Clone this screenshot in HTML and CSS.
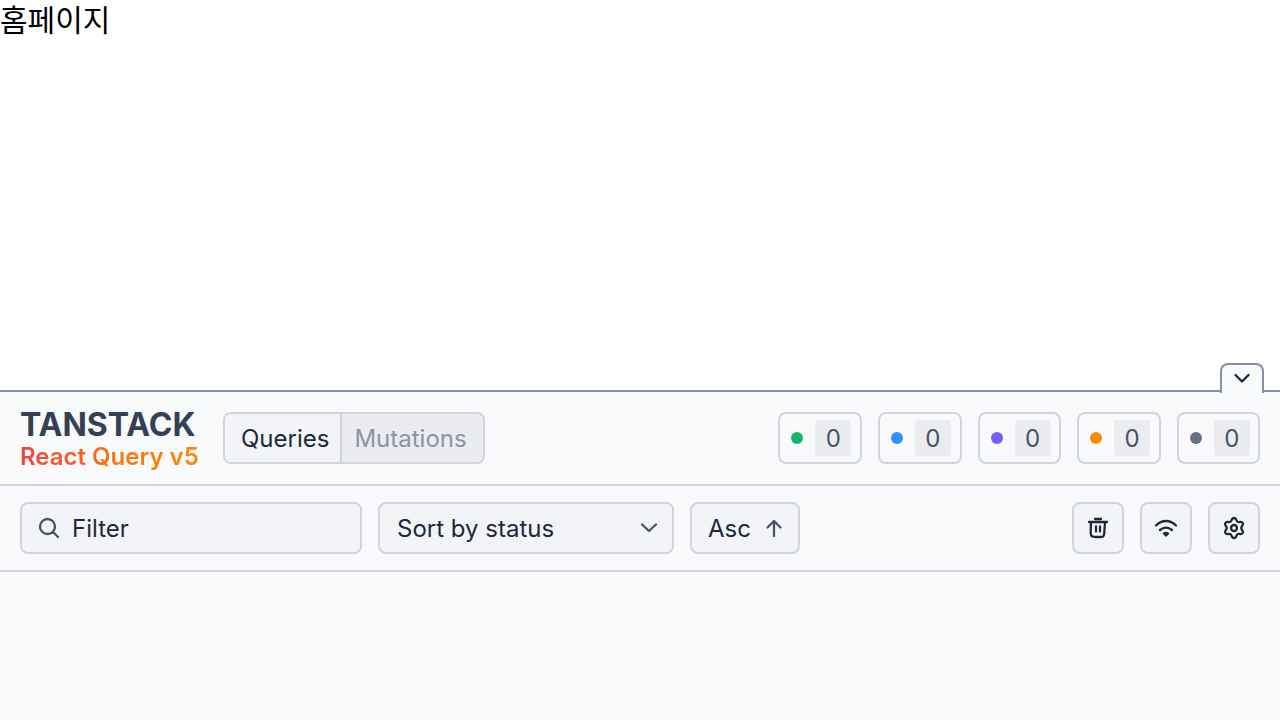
FILE: index.html
```html
<!DOCTYPE html>
<html lang="ko">
<head>
    <meta charset="UTF-8">
    <meta name="viewport" content="width=device-width, initial-scale=1.0">
    <title>홈페이지</title>
    <link rel="stylesheet" href="styles.css">
</head>
<body>
    <div class="page-title">홈페이지</div>

    <div class="devtools">
        <button class="close-tab" aria-label="Close">
            <svg class="icon" width="24" height="24" viewBox="0 0 24 24"><path d="M5.5 9l6.5 6.5 6.5-6.5"/></svg>
        </button>

        <div class="top-row">
            <div class="logo">
                <span class="logo-main">TANSTACK</span>
                <span class="logo-sub">React Query v5</span>
            </div>
            <div class="tabs">
                <span class="tab tab-active">Queries</span>
                <span class="tab">Mutations</span>
            </div>
            <div class="badges">
                <div class="badge"><span class="dot dot-green"></span><span class="count">0</span></div>
                <div class="badge"><span class="dot dot-blue"></span><span class="count">0</span></div>
                <div class="badge"><span class="dot dot-purple"></span><span class="count">0</span></div>
                <div class="badge"><span class="dot dot-orange"></span><span class="count">0</span></div>
                <div class="badge"><span class="dot dot-gray"></span><span class="count">0</span></div>
            </div>
        </div>

        <div class="filter-row">
            <div class="field filter">
                <svg class="icon icon-muted" width="24" height="24" viewBox="0 0 24 24"><path d="M21 21l-5.2-5.2M18 10.5a7.5 7.5 0 11-15 0 7.5 7.5 0 0115 0z"/></svg>
                <span>Filter</span>
            </div>
            <div class="field sort">
                <span>Sort by status</span>
                <svg class="icon icon-muted" width="24" height="24" viewBox="0 0 24 24"><path d="M5 8.5l7 6.5 7-6.5"/></svg>
            </div>
            <div class="field asc">
                <span>Asc</span>
                <svg class="icon icon-muted" width="24" height="24" viewBox="0 0 24 24"><path d="M12 20V5m0 0l-6.5 6.5M12 5l6.5 6.5"/></svg>
            </div>
            <div class="actions">
                <button class="icon-btn" aria-label="Clear">
                    <svg class="icon" width="24" height="24" viewBox="0 0 24 24"><path d="M9 3h6M3 6h18m-2 0l-.701 10.52c-.105 1.578-.158 2.367-.499 2.965a3 3 0 01-1.298 1.215c-.62.3-1.41.3-2.993.3h-3.018c-1.582 0-2.373 0-2.993-.3A3 3 0 015.2 19.485c-.34-.598-.394-1.387-.499-2.966L5 6m5 4.5v5m4-5v5"/></svg>
                </button>
                <button class="icon-btn" aria-label="Offline">
                    <svg class="icon" width="24" height="24" viewBox="0 0 24 24"><path d="M2 9.5C5 6.5 8.5 5 12 5s7 1.500 10 4.500M6 14c2-1.600 4-2.300 6-2.300s4 .7 6 2.300M10 17.500c.6-.4 1.300-.6 2-.6s1.400.2 2 .6L12 19.500z"/></svg>
                </button>
                <button class="icon-btn" aria-label="Settings">
                    <svg class="icon" width="24" height="24" viewBox="0 0 24 24"><path d="M9.395 19.371l.585 1.315a2.212 2.212 0 004.044 0l.584-1.315a2.426 2.426 0 012.47-1.423l1.43.152a2.212 2.212 0 002.022-3.502l-.847-1.164A2.43 2.43 0 0119.224 12c0-.513.163-1.014.464-1.429l.847-1.163a2.212 2.212 0 00-2.022-3.502l-1.43.152a2.43 2.43 0 01-2.47-1.428l-.59-1.315a2.212 2.212 0 00-4.044 0l-.584 1.315a2.43 2.43 0 01-2.47 1.428l-1.435-.152a2.212 2.212 0 00-2.022 3.502l.847 1.163a2.43 2.43 0 010 2.858l-.847 1.163A2.212 2.212 0 005.49 18.094l1.43-.152a2.434 2.434 0 012.475 1.429z"/><circle cx="12" cy="12" r="3"/></svg>
                </button>
            </div>
        </div>
    </div>
</body>
</html>
```

FILE: styles.css
```css
* {
    box-sizing: border-box;
}
body {
    margin: 0;
    height: 720px;
    display: flex;
    flex-direction: column;
    overflow: hidden;
    background-color: #fff;
    color: #1d2939;
    font-family: Inter, "Noto Sans CJK KR", sans-serif;
    font-size: 24px;
}
.page-title {
    font-family: "Noto Sans CJK KR", sans-serif;
    font-size: 30px;
    line-height: 36px;
    color: #000;
}
.devtools {
    position: relative;
    margin-top: auto;
    height: 330px;
    background-color: #f9fafb;
    border-top: 2px solid #8490a3;
}
.close-tab {
    position: absolute;
    top: -29px;
    right: 16px;
    width: 44px;
    height: 30px;
    padding: 0 0 2px;
    display: flex;
    align-items: center;
    justify-content: center;
    background-color: #f9fafb;
    border: 2px solid #8490a3;
    border-bottom: none;
    border-radius: 8px 8px 0 0;
}
.icon {
    display: block;
    flex-shrink: 0;
    fill: none;
    stroke: #1d2939;
    stroke-width: 2.3;
    stroke-linecap: round;
    stroke-linejoin: round;
}
.icon-muted {
    stroke: #475467;
}
.top-row {
    height: 94px;
    padding: 0 20px;
    display: flex;
    align-items: center;
    border-bottom: 2px solid #d0d5dd;
}
.logo {
    display: flex;
    flex-direction: column;
    width: 203px;
    margin-top: 5px;
}
.logo-main {
    font-size: 32px;
    font-weight: 700;
    line-height: 33px;
    color: #344054;
}
.logo-sub {
    font-size: 24px;
    font-weight: 600;
    line-height: 32px;
    width: fit-content;
    background: linear-gradient(to right, #ef4444, #f97316 50%, #ff8a00);
    -webkit-background-clip: text;
    background-clip: text;
    color: transparent;
}
.tabs {
    display: flex;
    height: 52px;
    border: 2px solid #d0d5dd;
    border-radius: 8px;
    overflow: hidden;
}
.tab {
    display: flex;
    align-items: center;
    padding: 0 16px 0 12px;
    background-color: #eaecf0;
    color: #8a94a6;
}
.tab-active {
    padding: 0 11px 0 16px;
    background-color: #f2f4f7;
    color: #1d2939;
    border-right: 2px solid #d0d5dd;
}
.badges {
    margin-left: auto;
    margin-right: -0.3px;
    display: flex;
    gap: 16px;
}
.badge {
    width: 83.6px;
    height: 52px;
    padding-left: 11px;
    display: flex;
    align-items: center;
    gap: 12px;
    border: 2px solid #d0d5dd;
    border-radius: 8px;
}
.dot {
    width: 12px;
    height: 12px;
    border-radius: 50%;
}
.dot-green {
    background-color: #12b76a;
}
.dot-blue {
    background-color: #2e90fa;
}
.dot-purple {
    background-color: #7a5af8;
}
.dot-orange {
    background-color: #fb8c00;
}
.dot-gray {
    background-color: #667085;
}
.count {
    width: 36px;
    height: 36px;
    display: flex;
    align-items: center;
    justify-content: center;
    border-radius: 4px;
    background-color: #eaecf0;
    color: #475467;
}
.filter-row {
    height: 86px;
    padding: 0 20px;
    display: flex;
    align-items: center;
    gap: 16px;
    border-bottom: 2px solid #d0d5dd;
}
.field {
    height: 52px;
    display: flex;
    align-items: center;
    background-color: #f2f4f7;
    border: 2px solid #d0d5dd;
    border-radius: 8px;
}
.filter {
    width: 342px;
    padding-left: 15px;
    gap: 11px;
}
.sort {
    width: 296px;
    padding: 0 11px 0 17px;
    justify-content: space-between;
}
.asc {
    width: 110px;
    padding: 0 12px 0 16px;
    justify-content: space-between;
}
.actions {
    margin-left: auto;
    display: flex;
    gap: 16px;
}
.icon-btn {
    width: 52px;
    height: 52px;
    padding: 0;
    display: flex;
    align-items: center;
    justify-content: center;
    background-color: #f2f4f7;
    border: 2px solid #d0d5dd;
    border-radius: 8px;
}
```
